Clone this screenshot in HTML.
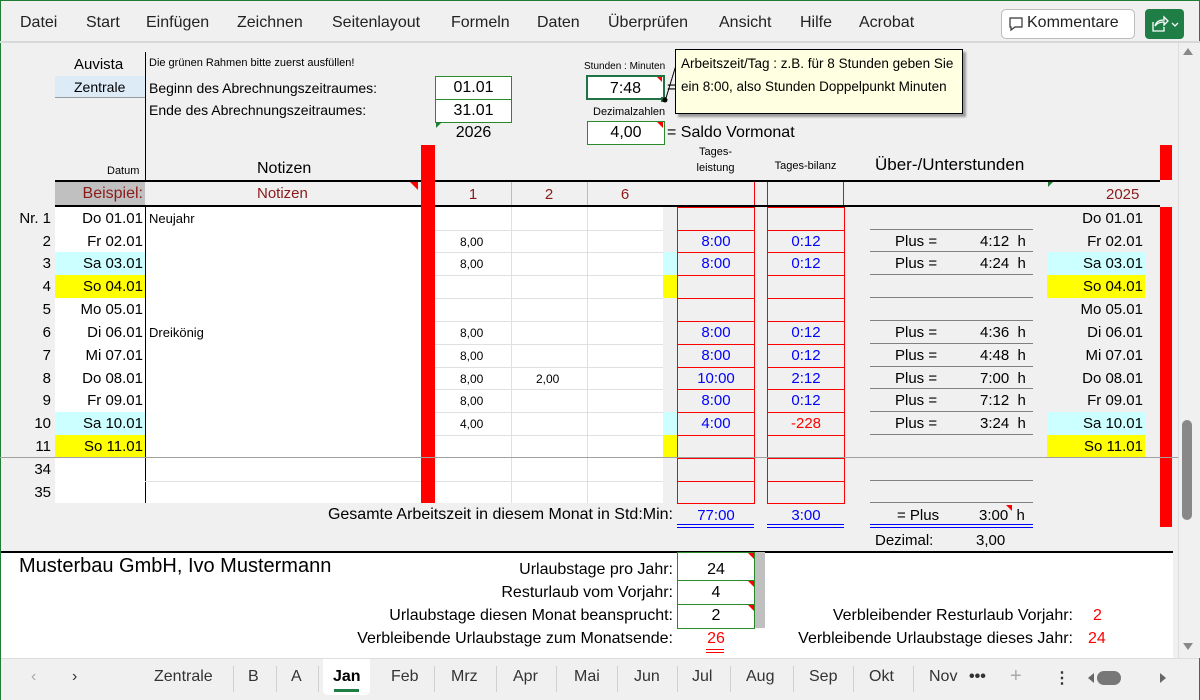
<!DOCTYPE html>
<html><head><meta charset="utf-8"><style>
*{margin:0;padding:0;box-sizing:border-box}
body{width:1200px;height:700px;overflow:hidden;background:#f0f0f0;font-family:"Liberation Sans Narrow","Liberation Sans",sans-serif;color:#000;position:relative}
div,span{position:absolute}
.m{top:14px;color:#222;font-family:"Liberation Sans",sans-serif;font-size:16px}
.t{font-size:15px;white-space:nowrap}
.b{font-size:16px}
.s{font-size:12px;white-space:nowrap}
.r{text-align:right}
.c{text-align:center}
.red{background:#f00}
.box{border:1px solid #f00}
.pl{border-bottom:1px solid #808080;left:870px;width:163px;height:1px}
.hl{left:435px;width:228px;height:1px;background:#e0e0e0}
.blue{color:#00f}
.dr{color:#8b1a1a}
.g{border:1px solid #2a8a2a;background:#fff;text-align:center;font-size:16px}
.tab{top:668px;color:#333;font-family:"Liberation Sans",sans-serif;font-size:16px}
.sep{top:666px;width:1px;height:26px;background:#d0d0d0}
</style></head><body>
<div style="left:0;top:0;width:1200px;height:700px;border:1px solid #1e7e34;border-bottom:none"></div>
<div class="m" style="left:20px">Datei</div><div class="m" style="left:86px">Start</div><div class="m" style="left:146px">Einfügen</div><div class="m" style="left:237px">Zeichnen</div><div class="m" style="left:332px">Seitenlayout</div><div class="m" style="left:451px">Formeln</div><div class="m" style="left:537px">Daten</div><div class="m" style="left:608px">Überprüfen</div><div class="m" style="left:719px">Ansicht</div><div class="m" style="left:800px">Hilfe</div><div class="m" style="left:859px">Acrobat</div>
<div style="left:1001px;top:9px;width:134px;height:30px;border:1px solid #bbb;border-radius:5px;background:#fff"></div>
<svg style="position:absolute;left:1008px;top:16px" width="16" height="16"><path d="M2 2h12v9H7l-4 3v-3H2z" fill="none" stroke="#333" stroke-width="1.2"/></svg>
<div class="m" style="left:1027px;top:14px">Kommentare</div>
<div style="left:1145px;top:9px;width:39px;height:30px;background:#1e7e45;border-radius:4px"></div>
<svg style="position:absolute;left:1150px;top:14px" width="30" height="20"><path d="M3 8v9h11v-4M5 12c1-4 4-6 9-6V3l4 4-4 4V8c-4 0-7 1-9 4z" fill="none" stroke="#fff" stroke-width="1.3"/><path d="M22 9l3 3 3-3" fill="none" stroke="#fff" stroke-width="1.3"/></svg>
<div style="left:0;top:41px;width:1200px;height:2px;background:#d8d8d8"></div>
<div style="left:1178px;top:43px;width:22px;height:615px;background:#f0f0f0;border-left:1px solid #ddd"></div>
<div style="left:1183px;top:48px;width:0;height:0;border-left:5px solid transparent;border-right:5px solid transparent;border-bottom:7px solid #888"></div>
<div style="left:1183px;top:643px;width:0;height:0;border-left:5px solid transparent;border-right:5px solid transparent;border-top:7px solid #888"></div>
<div style="left:1182px;top:420px;width:10px;height:100px;background:#888;border-radius:5px"></div>

<div class="t" style="left:74px;top:56px">Auvista</div>
<div style="left:55px;top:76px;width:90px;height:22px;background:#ddebf7;border-bottom:1px solid #999"></div>
<div class="t" style="left:74px;top:79px;font-size:14px">Zentrale</div>
<div style="left:145px;top:52px;width:1px;height:128px;background:#000"></div>
<div class="s" style="left:149px;top:57px;font-size:11px">Die grünen Rahmen bitte zuerst ausfüllen!</div>
<div class="t" style="left:149px;top:80px;font-size:14px">Beginn des Abrechnungszeitraumes:</div>
<div class="t" style="left:149px;top:102px;font-size:14px">Ende des Abrechnungszeitraumes:</div>
<div class="g" style="left:435px;top:76px;width:77px;height:24px;line-height:22px">01.01</div>
<div class="g" style="left:435px;top:99px;width:77px;height:24px;line-height:22px">31.01</div>
<div style="left:436px;top:122px;border-top:6px solid #1e7e34;border-right:6px solid transparent"></div>
<div class="t c" style="left:435px;top:124px;width:77px;font-size:16px">2026</div>
<div class="s" style="left:584px;top:61px;font-size:10px">Stunden : Minuten</div>
<div class="g" style="left:586px;top:75px;width:79px;height:25px;line-height:23px;border:2px solid #217346">7:48</div>
<div style="left:661px;top:97px;width:5px;height:5px;background:#217346"></div>
<div style="left:657px;top:77px;border-top:5px solid #f00;border-left:5px solid transparent"></div>
<div class="t" style="left:667px;top:79px">=</div>
<div class="s" style="left:593px;top:106px;font-size:11px">Dezimalzahlen</div>
<div class="g" style="left:587px;top:121px;width:78px;height:24px;line-height:22px">4,00</div>
<div style="left:657px;top:122px;border-top:6px solid #f00;border-left:6px solid transparent"></div>
<div class="t" style="left:667px;top:124px;font-size:16px">= Saldo Vormonat</div>
<svg style="position:absolute;left:660px;top:50px" width="25" height="55"><path d="M20 2L6 48" stroke="#000" stroke-width="1"/><circle cx="5" cy="50" r="2.5"/></svg>
<div style="left:675px;top:49px;width:288px;height:65px;background:#ffffe1;border:1px solid #000;box-shadow:3px 3px 2px #999"></div>
<div class="t" style="left:681px;top:52px;font-family:'Liberation Sans',sans-serif;font-size:13.5px;line-height:23px">Arbeitszeit/Tag : z.B. für 8 Stunden geben Sie<br>ein 8:00, also Stunden Doppelpunkt Minuten</div>

<div class="s" style="left:107px;top:165px;font-size:11px">Datum</div>
<div class="t" style="left:257px;top:160px;font-size:16px">Notizen</div>
<div class="s c" style="left:677px;top:144px;width:77px;font-size:11px;line-height:16px">Tages-<br>leistung</div>
<div class="s c" style="left:762px;top:160px;width:87px;font-size:11px">Tages-bilanz</div>
<div class="t" style="left:875px;top:155px;font-size:17px">Über-/Unterstunden</div>
<div style="left:55px;top:181px;width:90px;height:26px;background:#c0c0c0"></div>
<div class="t r dr" style="left:55px;top:185px;width:88px;font-size:16px">Beispiel:</div>
<div class="t dr" style="left:257px;top:185px;font-size:15px">Notizen</div>
<div class="t c dr" style="left:435px;top:186px;width:76px">1</div>
<div class="t c dr" style="left:511px;top:186px;width:76px">2</div>
<div class="t c dr" style="left:587px;top:186px;width:76px">6</div>
<div class="t dr" style="left:1106px;top:186px">2025</div>
<div style="left:511px;top:181px;width:1px;height:26px;background:#bbb"></div>
<div style="left:587px;top:181px;width:1px;height:26px;background:#bbb"></div>
<div style="left:754px;top:181px;width:1px;height:26px;background:#f00"></div>
<div style="left:767px;top:181px;width:1px;height:26px;background:#f00"></div>
<div style="left:843px;top:181px;width:1px;height:26px;background:#f00"></div>
<div style="left:1048px;top:181px;border-top:6px solid #1e7e34;border-right:6px solid transparent"></div>
<div style="left:410px;top:182px;border-top:8px solid #f00;border-left:8px solid transparent"></div>
<div style="left:55px;top:180px;width:1105px;height:2px;background:#000"></div>
<div style="left:55px;top:205px;width:1105px;height:2px;background:#000"></div>

<div style="left:55px;top:207px;width:608px;height:296px;background:#fff"></div>
<div style="left:145px;top:207px;width:1px;height:296px;background:#000"></div>
<div style="left:511px;top:207px;width:1px;height:296px;background:#e0e0e0"></div>
<div style="left:587px;top:207px;width:1px;height:296px;background:#e0e0e0"></div>
<div class="hl" style="top:230px"></div><div class="hl" style="top:252px"></div><div class="hl" style="top:275px"></div><div class="hl" style="top:298px"></div><div class="hl" style="top:321px"></div><div class="hl" style="top:344px"></div><div class="hl" style="top:367px"></div><div class="hl" style="top:389px"></div><div class="hl" style="top:412px"></div><div class="hl" style="top:435px"></div><div class="hl" style="top:481px;left:145px;width:518px"></div>
<div style="left:55px;top:252px;width:90px;height:23px;background:#ccffff"></div>
<div style="left:55px;top:412px;width:90px;height:23px;background:#ccffff"></div>
<div style="left:55px;top:275px;width:90px;height:23px;background:#ffff00"></div>
<div style="left:55px;top:435px;width:90px;height:23px;background:#ffff00"></div>
<div style="left:663px;top:252px;width:14px;height:23px;background:#ccffff"></div>
<div style="left:663px;top:412px;width:14px;height:23px;background:#ccffff"></div>
<div style="left:663px;top:275px;width:14px;height:23px;background:#ffff00"></div>
<div style="left:663px;top:435px;width:14px;height:23px;background:#ffff00"></div>
<div style="left:1047px;top:252px;width:98px;height:23px;background:#ccffff"></div>
<div style="left:1047px;top:412px;width:98px;height:23px;background:#ccffff"></div>
<div style="left:1047px;top:275px;width:98px;height:23px;background:#ffff00"></div>
<div style="left:1047px;top:435px;width:98px;height:23px;background:#ffff00"></div>
<div class="red" style="left:421px;top:145px;width:14px;height:358px"></div>
<div class="red" style="left:1160px;top:145px;width:12px;height:35px"></div>
<div class="red" style="left:1160px;top:207px;width:12px;height:320px"></div>
<div class="box" style="left:677px;top:207px;width:78px;height:24px"></div><div class="box" style="left:767px;top:207px;width:78px;height:24px"></div>
<div class="box" style="left:677px;top:230px;width:78px;height:23px"></div><div class="box" style="left:767px;top:230px;width:78px;height:23px"></div>
<div class="box" style="left:677px;top:252px;width:78px;height:24px"></div><div class="box" style="left:767px;top:252px;width:78px;height:24px"></div>
<div class="box" style="left:677px;top:275px;width:78px;height:24px"></div><div class="box" style="left:767px;top:275px;width:78px;height:24px"></div>
<div class="box" style="left:677px;top:298px;width:78px;height:24px"></div><div class="box" style="left:767px;top:298px;width:78px;height:24px"></div>
<div class="box" style="left:677px;top:321px;width:78px;height:24px"></div><div class="box" style="left:767px;top:321px;width:78px;height:24px"></div>
<div class="box" style="left:677px;top:344px;width:78px;height:24px"></div><div class="box" style="left:767px;top:344px;width:78px;height:24px"></div>
<div class="box" style="left:677px;top:367px;width:78px;height:23px"></div><div class="box" style="left:767px;top:367px;width:78px;height:23px"></div>
<div class="box" style="left:677px;top:389px;width:78px;height:24px"></div><div class="box" style="left:767px;top:389px;width:78px;height:24px"></div>
<div class="box" style="left:677px;top:412px;width:78px;height:24px"></div><div class="box" style="left:767px;top:412px;width:78px;height:24px"></div>
<div class="box" style="left:677px;top:435px;width:78px;height:24px"></div><div class="box" style="left:767px;top:435px;width:78px;height:24px"></div>
<div class="box" style="left:677px;top:458px;width:78px;height:24px"></div><div class="box" style="left:767px;top:458px;width:78px;height:24px"></div>
<div class="box" style="left:677px;top:481px;width:78px;height:23px"></div><div class="box" style="left:767px;top:481px;width:78px;height:23px"></div>
<div class="pl" style="top:229px"></div><div class="pl" style="top:251px"></div><div class="pl" style="top:274px"></div><div class="pl" style="top:297px"></div><div class="pl" style="top:320px"></div><div class="pl" style="top:343px"></div><div class="pl" style="top:366px"></div><div class="pl" style="top:388px"></div><div class="pl" style="top:411px"></div><div class="pl" style="top:434px"></div><div class="pl" style="top:480px"></div><div class="pl" style="top:502px"></div>
<div style="left:0;top:457px;width:1178px;height:1px;background:#a0a0a0"></div>

<div class="t r" style="left:0;top:210px;width:51px">Nr. 1</div><div class="t r" style="left:55px;top:210px;width:88px">Do 01.01</div><div class="s" style="left:149px;top:211px;font-size:13px">Neujahr</div><div class="t r" style="left:1047px;top:210px;width:96px">Do 01.01</div>
<div class="t r" style="left:0;top:233px;width:51px">2</div><div class="t r" style="left:55px;top:233px;width:88px">Fr 02.01</div><div class="s" style="left:460px;top:235px">8,00</div><div class="t c blue" style="left:677px;top:233px;width:78px">8:00</div><div class="t c blue" style="left:767px;top:233px;width:78px">0:12</div><div class="t" style="left:895px;top:233px">Plus =</div><div class="t" style="left:980px;top:233px">4:12 &nbsp;h</div><div class="t r" style="left:1047px;top:233px;width:96px">Fr 02.01</div>
<div class="t r" style="left:0;top:255px;width:51px">3</div><div class="t r" style="left:55px;top:255px;width:88px">Sa 03.01</div><div class="s" style="left:460px;top:257px">8,00</div><div class="t c blue" style="left:677px;top:255px;width:78px">8:00</div><div class="t c blue" style="left:767px;top:255px;width:78px">0:12</div><div class="t" style="left:895px;top:255px">Plus =</div><div class="t" style="left:980px;top:255px">4:24 &nbsp;h</div><div class="t r" style="left:1047px;top:255px;width:96px">Sa 03.01</div>
<div class="t r" style="left:0;top:278px;width:51px">4</div><div class="t r" style="left:55px;top:278px;width:88px">So 04.01</div><div class="t r" style="left:1047px;top:278px;width:96px">So 04.01</div>
<div class="t r" style="left:0;top:301px;width:51px">5</div><div class="t r" style="left:55px;top:301px;width:88px">Mo 05.01</div><div class="t r" style="left:1047px;top:301px;width:96px">Mo 05.01</div>
<div class="t r" style="left:0;top:324px;width:51px">6</div><div class="t r" style="left:55px;top:324px;width:88px">Di 06.01</div><div class="s" style="left:149px;top:325px;font-size:13px">Dreikönig</div><div class="s" style="left:460px;top:326px">8,00</div><div class="t c blue" style="left:677px;top:324px;width:78px">8:00</div><div class="t c blue" style="left:767px;top:324px;width:78px">0:12</div><div class="t" style="left:895px;top:324px">Plus =</div><div class="t" style="left:980px;top:324px">4:36 &nbsp;h</div><div class="t r" style="left:1047px;top:324px;width:96px">Di 06.01</div>
<div class="t r" style="left:0;top:347px;width:51px">7</div><div class="t r" style="left:55px;top:347px;width:88px">Mi 07.01</div><div class="s" style="left:460px;top:349px">8,00</div><div class="t c blue" style="left:677px;top:347px;width:78px">8:00</div><div class="t c blue" style="left:767px;top:347px;width:78px">0:12</div><div class="t" style="left:895px;top:347px">Plus =</div><div class="t" style="left:980px;top:347px">4:48 &nbsp;h</div><div class="t r" style="left:1047px;top:347px;width:96px">Mi 07.01</div>
<div class="t r" style="left:0;top:370px;width:51px">8</div><div class="t r" style="left:55px;top:370px;width:88px">Do 08.01</div><div class="s" style="left:460px;top:372px">8,00</div><div class="s" style="left:536px;top:372px">2,00</div><div class="t c blue" style="left:677px;top:370px;width:78px">10:00</div><div class="t c blue" style="left:767px;top:370px;width:78px">2:12</div><div class="t" style="left:895px;top:370px">Plus =</div><div class="t" style="left:980px;top:370px">7:00 &nbsp;h</div><div class="t r" style="left:1047px;top:370px;width:96px">Do 08.01</div>
<div class="t r" style="left:0;top:392px;width:51px">9</div><div class="t r" style="left:55px;top:392px;width:88px">Fr 09.01</div><div class="s" style="left:460px;top:394px">8,00</div><div class="t c blue" style="left:677px;top:392px;width:78px">8:00</div><div class="t c blue" style="left:767px;top:392px;width:78px">0:12</div><div class="t" style="left:895px;top:392px">Plus =</div><div class="t" style="left:980px;top:392px">7:12 &nbsp;h</div><div class="t r" style="left:1047px;top:392px;width:96px">Fr 09.01</div>
<div class="t r" style="left:0;top:415px;width:51px">10</div><div class="t r" style="left:55px;top:415px;width:88px">Sa 10.01</div><div class="s" style="left:460px;top:417px">4,00</div><div class="t c blue" style="left:677px;top:415px;width:78px">4:00</div><div class="t c" style="left:767px;top:415px;width:78px;color:#f00">-228</div><div class="t" style="left:895px;top:415px">Plus =</div><div class="t" style="left:980px;top:415px">3:24 &nbsp;h</div><div class="t r" style="left:1047px;top:415px;width:96px">Sa 10.01</div>
<div class="t r" style="left:0;top:438px;width:51px">11</div><div class="t r" style="left:55px;top:438px;width:88px">So 11.01</div><div class="t r" style="left:1047px;top:438px;width:96px">So 11.01</div>
<div class="t r" style="left:0;top:461px;width:51px">34</div>
<div class="t r" style="left:0;top:484px;width:51px">35</div>

<div class="t r b" style="left:200px;top:506px;width:473px">Gesamte Arbeitszeit in diesem Monat in Std:Min:</div>
<div class="t c blue" style="left:677px;top:507px;width:78px">77:00</div>
<div class="t c blue" style="left:767px;top:507px;width:78px">3:00</div>
<div class="t" style="left:897px;top:507px">= Plus</div>
<div class="t" style="left:979px;top:507px">3:00 &nbsp;h</div>
<div style="left:1006px;top:505px;border-top:6px solid #f00;border-left:6px solid transparent"></div>
<div style="left:677px;top:524px;width:77px;height:4px;border-top:1px solid #00f;border-bottom:1px solid #00f"></div>
<div style="left:767px;top:524px;width:77px;height:4px;border-top:1px solid #00f;border-bottom:1px solid #00f"></div>
<div style="left:870px;top:524px;width:163px;height:4px;border-top:1px solid #00f;border-bottom:1px solid #00f"></div>
<div class="t" style="left:875px;top:532px">Dezimal:</div>
<div class="t" style="left:976px;top:532px">3,00</div>

<div style="left:1px;top:551px;width:1172px;height:107px;background:#fff;border-top:2px solid #000"></div>
<div class="t" style="left:19px;top:555px;font-family:'Liberation Sans',sans-serif;font-size:20px">Musterbau GmbH, Ivo Mustermann</div>
<div style="left:754px;top:552px;width:11px;height:76px;background:#c0c0c0"></div>
<div style="left:677px;top:552px;width:78px;height:77px;border:1px solid #2a8a2a"></div>
<div style="left:677px;top:580px;width:78px;height:1px;background:#2a8a2a"></div>
<div style="left:677px;top:604px;width:78px;height:1px;background:#2a8a2a"></div>
<div style="left:748px;top:553px;border-top:6px solid #f00;border-left:6px solid transparent"></div>
<div style="left:748px;top:581px;border-top:6px solid #f00;border-left:6px solid transparent"></div>
<div style="left:748px;top:605px;border-top:6px solid #f00;border-left:6px solid transparent"></div>
<div class="t r b" style="left:300px;top:561px;width:373px">Urlaubstage pro Jahr:</div>
<div class="t r b" style="left:300px;top:584px;width:373px">Resturlaub vom Vorjahr:</div>
<div class="t r b" style="left:300px;top:607px;width:373px">Urlaubstage diesen Monat beansprucht:</div>
<div class="t r b" style="left:300px;top:630px;width:373px">Verbleibende Urlaubstage zum Monatsende:</div>
<div class="t c b" style="left:677px;top:561px;width:78px">24</div>
<div class="t c b" style="left:677px;top:584px;width:78px">4</div>
<div class="t c b" style="left:677px;top:607px;width:78px">2</div>
<div class="t c b" style="left:677px;top:630px;width:78px;color:#f00">26</div>
<div style="left:706px;top:649px;width:18px;height:4px;border-top:1px solid #f00;border-bottom:1px solid #f00"></div>
<div class="t r b" style="left:673px;top:607px;width:400px">Verbleibender Resturlaub Vorjahr:</div>
<div class="t r b" style="left:673px;top:630px;width:400px">Verbleibende Urlaubstage dieses Jahr:</div>
<div class="t b" style="left:1093px;top:607px;color:#f00">2</div>
<div class="t b" style="left:1088px;top:630px;color:#f00">24</div>

<div style="left:1px;top:658px;width:1198px;height:42px;background:#f0f0f0;border-top:1px solid #ddd"></div>
<div class="tab" style="left:31px;color:#aaa">‹</div><div class="tab" style="left:72px">›</div>
<div style="left:323px;top:659px;width:47px;height:36px;background:#fff;border-radius:0 0 5px 5px"></div>
<div class="tab" style="left:154px">Zentrale</div><div class="sep" style="left:233px"></div>
<div class="tab" style="left:248px">B</div><div class="sep" style="left:276px"></div>
<div class="tab" style="left:291px">A</div><div class="sep" style="left:318px"></div>
<div class="tab" style="left:333px;font-weight:bold;color:#000">Jan</div>
<div style="left:334px;top:689px;width:25px;height:3px;background:#1e7e45"></div>
<div class="tab" style="left:391px">Feb</div><div class="sep" style="left:434px"></div>
<div class="tab" style="left:451px">Mrz</div><div class="sep" style="left:496px"></div>
<div class="tab" style="left:513px">Apr</div><div class="sep" style="left:556px"></div>
<div class="tab" style="left:574px">Mai</div><div class="sep" style="left:617px"></div>
<div class="tab" style="left:634px">Jun</div><div class="sep" style="left:677px"></div>
<div class="tab" style="left:692px">Jul</div><div class="sep" style="left:730px"></div>
<div class="tab" style="left:746px">Aug</div><div class="sep" style="left:793px"></div>
<div class="tab" style="left:809px">Sep</div><div class="sep" style="left:853px"></div>
<div class="tab" style="left:869px">Okt</div><div class="sep" style="left:913px"></div>
<div class="tab" style="left:929px;width:30px;overflow:hidden">Nov</div>
<div class="tab" style="left:969px;font-weight:bold">•••</div>
<div class="tab" style="left:1010px;color:#aaa;font-size:20px;top:665px">+</div>
<div class="tab" style="left:1054px;font-weight:bold">⋮</div>
<div style="left:1088px;top:673px;width:0;height:0;border-top:5px solid transparent;border-bottom:5px solid transparent;border-right:6px solid #666"></div>
<div style="left:1097px;top:671px;width:24px;height:14px;background:#777;border-radius:7px"></div>
<div style="left:1160px;top:673px;width:0;height:0;border-top:5px solid transparent;border-bottom:5px solid transparent;border-left:6px solid #666"></div>
</body></html>
